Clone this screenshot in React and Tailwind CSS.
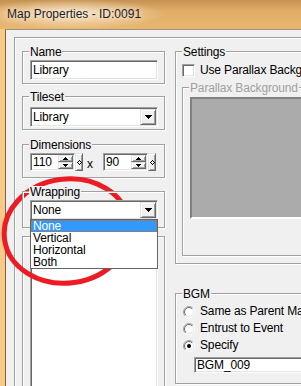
import React from 'react';

const sunken =
  'border border-t-[#a0a0a0] border-l-[#a0a0a0] border-r-white border-b-white p-px shadow-[inset_1px_1px_0_#696969,inset_-1px_-1px_0_#e3e3e3]';
const raised =
  'border border-t-[#e3e3e3] border-l-[#e3e3e3] border-r-[#696969] border-b-[#696969] bg-[#f0f0f0] shadow-[inset_1px_1px_0_#fff,inset_-1px_-1px_0_#a0a0a0]';

const DownArrow = () => (
  <svg width="7" height="4" viewBox="0 0 7 4" shapeRendering="crispEdges">
    <polygon points="0,0 7,0 3.5,4" fill="#000" />
  </svg>
);

const SmallArrow = ({ up }) => (
  <svg width="5" height="3" viewBox="0 0 5 3" shapeRendering="crispEdges">
    <polygon points={up ? '0,3 5,3 2.5,0' : '0,0 5,0 2.5,3'} fill="#000" />
  </svg>
);

const Group = ({ label, className = '', disabled, children }) => (
  <div className={`relative border border-[#a0a0a0] shadow-[inset_1px_1px_0_#fff,1px_1px_0_#fff] ${className}`}>
    <span
      className={`absolute -top-[6px] left-[6px] whitespace-nowrap bg-[#f0f0f0] px-px leading-[12px] ${
        disabled ? 'text-[#a0a0a0]' : 'text-black'
      }`}
    >
      {label}
    </span>
    {children}
  </div>
);

const Combo = ({ value, children }) => (
  <div className={`relative flex h-[20px] w-[128px] bg-white ${sunken}`}>
    <span className="flex-1 pl-px leading-[16px]">{value}</span>
    <div className={`flex w-[16px] items-center justify-center ${raised}`}>
      <DownArrow />
    </div>
    {children}
  </div>
);

const Spin = ({ value }) => (
  <div className="flex h-[18px]">
    <div className={`flex w-[45px] bg-white ${sunken}`}>
      <span className="flex-1 pl-px leading-[14px]">{value}</span>
      <div className="flex w-[15px] flex-col">
        <div className={`flex h-[7px] items-center justify-center ${raised}`}>
          <SmallArrow up />
        </div>
        <div className={`flex h-[7px] items-center justify-center ${raised}`}>
          <SmallArrow />
        </div>
      </div>
    </div>
    <div className={`flex w-[8px] items-center justify-center ${raised}`}>
      <svg width="5" height="5" viewBox="0 0 5 5" shapeRendering="crispEdges">
        <polygon points="2.5,0.5 4.5,2.5 2.5,4.5 0.5,2.5" fill="none" stroke="#000" strokeWidth="1" />
      </svg>
    </div>
  </div>
);

const Radio = ({ id, checked }) => (
  <svg width="12" height="12" viewBox="0 0 12 12">
    <defs>
      <linearGradient id={`ro${id}`} x1="0" y1="0" x2="1" y2="1">
        <stop offset="0.5" stopColor="#a0a0a0" />
        <stop offset="0.5" stopColor="#ffffff" />
      </linearGradient>
      <linearGradient id={`ri${id}`} x1="0" y1="0" x2="1" y2="1">
        <stop offset="0.5" stopColor="#696969" />
        <stop offset="0.5" stopColor="#e3e3e3" />
      </linearGradient>
    </defs>
    <circle cx="6" cy="6" r="5.5" fill="none" stroke={`url(#ro${id})`} strokeWidth="1" />
    <circle cx="6" cy="6" r="4.5" fill="#fff" stroke={`url(#ri${id})`} strokeWidth="1" />
    {checked && <circle cx="6" cy="6" r="2" fill="#000" />}
  </svg>
);

const wrapItems = ['None', 'Vertical', 'Horizontal', 'Both'];

export default function App() {
  return (
    <div className="relative h-[386px] w-[301px] overflow-hidden bg-[#f0f0f0] font-['Liberation_Sans',Arial,sans-serif] text-[12px] text-black">
      {/* title bar */}
      <div className="h-[29px] bg-[radial-gradient(ellipse_95px_15px_at_72px_14px,rgba(250,236,214,0.95),rgba(250,236,214,0)),linear-gradient(180deg,#c49252_0%,#dfab66_35%,#e8b872_100%)] pl-[7px] pt-[8px] leading-[12px] text-[#1c1c28] [text-shadow:0_0_6px_rgba(255,247,232,0.9)]">
        Map Properties - ID:0091
      </div>

      <div className="flex h-[357px]">
        <div className="w-[5px] shrink-0 bg-[#f8c988]" />
        <div className="flex-1 border-l border-t border-l-[#7c6346] border-t-[#a09080] pl-[8px] pt-[7px] tracking-[-0.15px]">
          <div className="flex h-[400px] w-[400px] border border-[#a0a0a0] pl-[7px] pt-[13px] shadow-[inset_1px_1px_0_#fff]">
            {/* left column */}
            <div className="flex w-[143px] shrink-0 flex-col">
              <Group label="Name" className="h-[34px] pl-[7px] pt-[8px]">
                <div className={`h-[20px] w-[128px] bg-white pl-[2px] leading-[16px] ${sunken}`}>Library</div>
              </Group>

              <Group label="Tileset" className="mt-[12px] h-[36px] pl-[7px] pt-[10px]">
                <Combo value="Library" />
              </Group>

              <Group label="Dimensions" className="mt-[14px] h-[35px] pl-[7px] pt-[8px]">
                <div className="flex items-end">
                  <Spin value="110" />
                  <span className="w-[20px] pl-[4px] leading-[14px]">x</span>
                  <Spin value="90" />
                </div>
              </Group>

              <Group label="Wrapping" className="z-10 mt-[13px] h-[39px] pl-[7px] pt-[8px]">
                <Combo value="None">
                  <div className="absolute -left-px top-[18px] w-[128px] border border-[#646464] bg-white">
                    {wrapItems.map((item, i) => (
                      <div
                        key={item}
                        className={`h-[12px] pl-[2px] leading-[12px] ${
                          i === 0
                            ? 'bg-[#3399ff] text-white outline-1 -outline-offset-1 outline-dotted outline-[#cc6a1e]'
                            : ''
                        }`}
                      >
                        {item}
                      </div>
                    ))}
                  </div>
                </Combo>
              </Group>

              <Group label="" className="mt-[8px] h-[200px] pl-[7px] pt-[7px]">
                <div className={`h-[200px] w-[128px] bg-white ${sunken}`} />
              </Group>
            </div>

            {/* right column */}
            <div className="ml-[10px] flex w-[220px] flex-col">
              <Group label="Settings" className="h-[213px] pl-[6px] pt-[12px]">
                <div className="flex items-center gap-[5px] whitespace-nowrap">
                  <div className={`h-[13px] w-[13px] bg-white ${sunken}`} />
                  <span className="leading-[13px]">Use Parallax Background</span>
                </div>
                <Group label="Parallax Background" disabled className="mt-[10px] h-[169px] pl-[7px] pt-[9px]">
                  <div className="h-[122px] w-[200px] border-2 border-t-[#808080] border-l-[#808080] border-r-white border-b-white bg-[#ababab]" />
                </Group>
              </Group>

              <Group label="BGM" className="mt-[29px] h-[91px] pl-[7px] pt-[9px]">
                {['Same as Parent Map', 'Entrust to Event', 'Specify'].map((t, i) => (
                  <div key={t} className="flex h-[17px] items-center gap-[5px] whitespace-nowrap">
                    <Radio id={i} checked={i === 2} />
                    <span className="leading-[13px]">{t}</span>
                  </div>
                ))}
                <div className={`ml-[11px] mt-[3px] h-[16px] w-[180px] bg-white pl-[2px] leading-[12px] ${sunken}`}>
                  BGM_009
                </div>
              </Group>
            </div>
          </div>
        </div>
      </div>

      <svg className="pointer-events-none absolute left-0 top-0" width="301" height="386" viewBox="0 0 301 386">
        <ellipse
          cx="67"
          cy="231"
          rx="63"
          ry="52"
          transform="rotate(-8 67 231)"
          fill="none"
          stroke="#ed1c24"
          strokeWidth="5"
        />
      </svg>
    </div>
  );
}
